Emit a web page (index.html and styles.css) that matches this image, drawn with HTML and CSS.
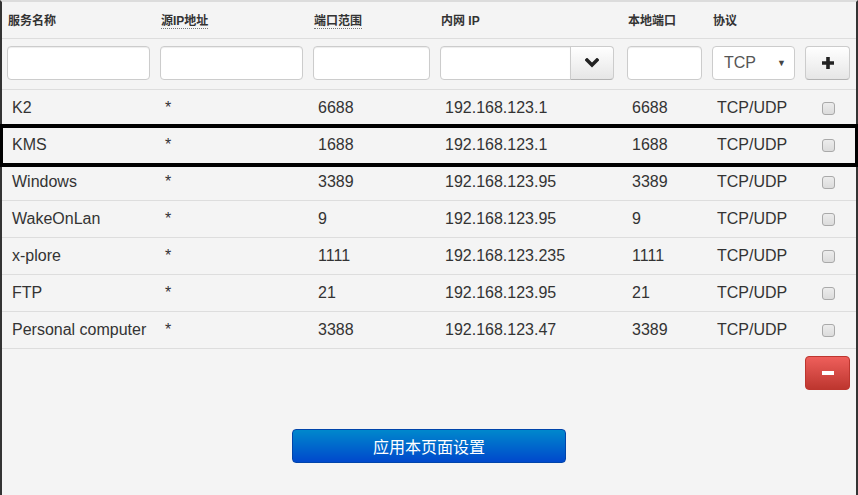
FILE: index.html
```html
<!DOCTYPE html>
<html lang="zh-CN">
<head>
  <meta charset="UTF-8" />
  <meta name="viewport" content="width=device-width, initial-scale=1.0"/>
  <title>端口转发</title>
  <link rel="stylesheet" href="styles.css">
</head>
<body>

  <div class="panel">
    <table class="rules">
      <colgroup>
        <col style="width: 153px">
        <col style="width: 153px">
        <col style="width: 127px">
        <col style="width: 187px">
        <col style="width: 85px">
        <col style="width: 93px">
        <col style="width: 56px">
      </colgroup>
      <thead>
        <tr class="head">
          <th>服务名称</th>
          <th><abbr>源IP地址</abbr></th>
          <th><abbr>端口范围</abbr></th>
          <th>内网 IP</th>
          <th>本地端口</th>
          <th>协议</th>
          <th></th>
        </tr>
        <tr class="new-row">
          <td><input type="text" class="field"></td>
          <td><input type="text" class="field"></td>
          <td><input type="text" class="field"></td>
          <td>
            <div class="ip-group">
              <input type="text" class="field">
              <button class="btn-drop">
                <svg width="14" height="10" viewBox="0 0 14 10"><polyline points="2,2 7,7 12,2" fill="none" stroke="#222" stroke-width="3.4" stroke-linecap="square"/></svg>
              </button>
            </div>
          </td>
          <td><input type="text" class="field"></td>
          <td>
            <div class="proto">TCP<span class="caret">▼</span></div>
          </td>
          <td>
            <button class="btn-add">
              <svg width="14" height="14" viewBox="0 0 14 14"><path d="M7 1v12M1 7h12" stroke="#222" stroke-width="3.6"/></svg>
            </button>
          </td>
        </tr>
      </thead>
      <tbody>
        <tr><td>K2</td><td>*</td><td>6688</td><td>192.168.123.1</td><td>6688</td><td>TCP/UDP</td><td><span class="check"></span></td></tr>
        <tr class="selected"><td>KMS</td><td>*</td><td>1688</td><td>192.168.123.1</td><td>1688</td><td>TCP/UDP</td><td><span class="check"></span></td></tr>
        <tr><td>Windows</td><td>*</td><td>3389</td><td>192.168.123.95</td><td>3389</td><td>TCP/UDP</td><td><span class="check"></span></td></tr>
        <tr><td>WakeOnLan</td><td>*</td><td>9</td><td>192.168.123.95</td><td>9</td><td>TCP/UDP</td><td><span class="check"></span></td></tr>
        <tr><td>x-plore</td><td>*</td><td>1111</td><td>192.168.123.235</td><td>1111</td><td>TCP/UDP</td><td><span class="check"></span></td></tr>
        <tr><td>FTP</td><td>*</td><td>21</td><td>192.168.123.95</td><td>21</td><td>TCP/UDP</td><td><span class="check"></span></td></tr>
        <tr><td>Personal computer</td><td>*</td><td>3388</td><td>192.168.123.47</td><td>3389</td><td>TCP/UDP</td><td><span class="check"></span></td></tr>
      </tbody>
      <tfoot>
        <tr>
          <td colspan="6"></td>
          <td><button class="btn-remove"><span class="bar"></span></button></td>
        </tr>
      </tfoot>
    </table>

    <div class="actions">
      <button class="btn-apply">应用本页面设置</button>
    </div>
  </div>

</body>
</html>
```

FILE: styles.css
```css
body {
  margin: 0;
  font-family: "Liberation Sans", "Noto Sans CJK SC", sans-serif;
  background: #f4f4f4;
  color: #333;
}

.panel {
  width: 854px;
  height: 493px;
  border-top: 2px solid #dcdcdc;
  border-left: 2px solid #333;
  border-right: 2px solid #333;
  background: #f4f4f4;
}

.rules {
  width: 854px;
  table-layout: fixed;
  border-collapse: collapse;
}

.rules th {
  text-align: left;
  font-size: 12px;
  font-weight: bold;
  color: #333;
  line-height: 16px;
  padding: 11px 5px 9px 6px;
  border-bottom: 1px solid #ddd;
}

.rules abbr {
  text-decoration: none;
  border-bottom: 1px dotted #777;
}

.new-row td {
  padding: 7px 5px 9px 5px;
  border-bottom: 1px solid #ddd;
}

.field {
  display: block;
  box-sizing: border-box;
  width: 100%;
  height: 34px;
  margin: 0;
  border: 1px solid #ccc;
  border-radius: 4px;
  background: #fff;
  box-shadow: inset 0 1px 1px rgba(0,0,0,0.075);
}

.ip-group {
  display: flex;
  width: 174px;
}

.ip-group .field {
  flex: 1;
  width: auto;
  min-width: 0;
  border-radius: 4px 0 0 4px;
}

.btn-drop,
.btn-add {
  display: flex;
  align-items: center;
  justify-content: center;
  height: 34px;
  padding: 0;
  border: 1px solid #ccc;
  border-bottom-color: #b3b3b3;
  background: linear-gradient(#ffffff, #e6e6e6);
  cursor: pointer;
}

.btn-drop {
  width: 44px;
  margin-left: -1px;
  border-radius: 0 4px 4px 0;
}

.btn-add {
  width: 45px;
  border-radius: 4px;
}

.proto {
  box-sizing: border-box;
  height: 34px;
  display: flex;
  align-items: center;
  justify-content: space-between;
  padding: 0 8px 0 11px;
  border: 1px solid #ccc;
  border-radius: 4px;
  background: #fff;
  font-size: 16px;
  color: #555;
}

.proto .caret {
  font-size: 9px;
  color: #444;
}

.rules tbody td {
  font-size: 16px;
  line-height: 20px;
  padding: 8px 5px 8px 10px;
  border-bottom: 1px solid #ddd;
  white-space: nowrap;
  color: #333;
}

.rules tbody td:last-child {
  padding: 8px 0;
  text-align: center;
}

.rules tbody tr.selected {
  outline: 4px solid #000;
  outline-offset: -1px;
}

.check {
  display: inline-block;
  vertical-align: middle;
  box-sizing: border-box;
  width: 13px;
  height: 13px;
  margin-left: 0;
  border: 1px solid #a9a9a9;
  border-radius: 3px;
  background: linear-gradient(#ececec, #dcdcdc);
}

.rules tfoot td {
  padding: 7px 5px 0 5px;
}

.btn-remove {
  display: flex;
  align-items: center;
  justify-content: center;
  width: 45px;
  height: 34px;
  padding: 0;
  border: 1px solid #bd362f;
  border-radius: 4px;
  background: linear-gradient(#ee5f5b, #bd362f);
  cursor: pointer;
}

.btn-remove .bar {
  display: block;
  width: 12px;
  height: 4px;
  background: #fff;
}

.actions {
  display: flex;
  justify-content: center;
  margin-top: 39px;
}

.btn-apply {
  width: 274px;
  height: 34px;
  border: 1px solid #0044aa;
  border-radius: 4px;
  background: linear-gradient(#0088cc, #0048cc);
  color: #fff;
  font-family: "Noto Sans CJK SC", sans-serif;
  font-size: 16px;
  cursor: pointer;
}
```
